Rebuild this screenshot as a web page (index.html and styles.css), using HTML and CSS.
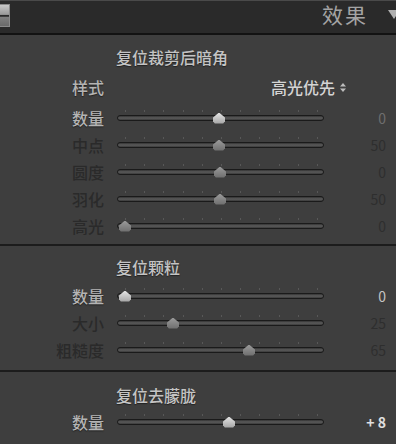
FILE: index.html
```html
<!DOCTYPE html>
<html lang="zh-CN">
<head>
    <meta charset="UTF-8">
    <title>效果</title>
    <link rel="stylesheet" href="styles.css">
</head>
<body>

<div class="panel">
    <div class="header">
        <div class="switch"></div>
        <div class="header-title">效果</div>
        <div class="header-arrow"></div>
    </div>

    <div class="section first">
        <div class="section-title">复位裁剪后暗角</div>
        <div class="style-row">
            <div class="label bright">样式</div>
            <div class="style-value">高光优先
                <svg width="8" height="11" viewBox="0 0 8 11"><path d="M4 1 L7 4.5 H1 Z M1 6.5 H7 L4 10 Z" fill="#bdbdbd"/></svg>
            </div>
        </div>
        <div class="row">
            <div class="label bright">数量</div>
            <div class="slider active"><div class="ticks"></div><div class="track"></div><div class="thumb" style="left: 96px"></div></div>
            <div class="value mid">0</div>
        </div>
        <div class="row">
            <div class="label">中点</div>
            <div class="slider"><div class="ticks"></div><div class="track"></div><div class="thumb" style="left: 96px"></div></div>
            <div class="value">50</div>
        </div>
        <div class="row">
            <div class="label">圆度</div>
            <div class="slider"><div class="ticks"></div><div class="track"></div><div class="thumb" style="left: 97px"></div></div>
            <div class="value">0</div>
        </div>
        <div class="row">
            <div class="label">羽化</div>
            <div class="slider"><div class="ticks"></div><div class="track"></div><div class="thumb" style="left: 97px"></div></div>
            <div class="value">50</div>
        </div>
        <div class="row">
            <div class="label">高光</div>
            <div class="slider"><div class="ticks"></div><div class="track"></div><div class="thumb" style="left: 2px"></div></div>
            <div class="value">0</div>
        </div>
    </div>

    <div class="section second">
        <div class="section-title">复位颗粒</div>
        <div class="row">
            <div class="label bright">数量</div>
            <div class="slider active"><div class="ticks"></div><div class="track"></div><div class="thumb" style="left: 2px"></div></div>
            <div class="value bright">0</div>
        </div>
        <div class="row">
            <div class="label">大小</div>
            <div class="slider"><div class="ticks"></div><div class="track"></div><div class="thumb" style="left: 50px"></div></div>
            <div class="value">25</div>
        </div>
        <div class="row">
            <div class="label">粗糙度</div>
            <div class="slider"><div class="ticks"></div><div class="track"></div><div class="thumb" style="left: 126px"></div></div>
            <div class="value">65</div>
        </div>
    </div>

    <div class="section third">
        <div class="section-title">复位去朦胧</div>
        <div class="row">
            <div class="label bright">数量</div>
            <div class="slider active"><div class="ticks"></div><div class="track"></div><div class="thumb" style="left: 106px"></div></div>
            <div class="value white">+ 8</div>
        </div>
    </div>
</div>

</body>
</html>
```

FILE: styles.css
```css
body {
    margin: 0;
    background-color: #3e3e3e;
    font-family: "Noto Sans CJK SC", "Noto Sans", sans-serif;
    overflow: hidden;
}
.panel {
    width: 396px;
    height: 444px;
    background-color: #3e3e3e;
    overflow: hidden;
}
.header {
    height: 32px;
    background-color: #2a2a2a;
    border-top: 1px solid #4a4a4a;
    border-bottom: 2px solid #121212;
    display: flex;
    align-items: center;
    position: relative;
}
.switch {
    width: 9px;
    height: 21px;
    margin-top: -4px;
    border: 1px solid #8a8a8a;
    border-left: none;
    background: linear-gradient(#c8c8c8, #9a9a9a 45%, #2a2a2a 48%, #2a2a2a 54%, #808080 57%, #6a6a6a);
}
.header-title {
    margin-left: auto;
    margin-right: 20px;
    margin-top: -6px;
    font-size: 21px;
    letter-spacing: 2px;
    color: #a4a4a4;
}
.header-arrow {
    width: 0;
    height: 0;
    border-left: 6px solid transparent;
    border-right: 6px solid transparent;
    border-top: 9px solid #b0b0b0;
    margin-right: -4px;
    margin-top: -6px;
}
.section {
    border-bottom: 2px solid #1c1c1c;
}
.section.first {
    padding: 9px 0 5px;
}
.section.second {
    padding: 8px 0 7px;
}
.section.third {
    padding: 10px 0 10px;
    border-bottom: none;
}
.section-title {
    height: 26px;
    line-height: 26px;
    padding-left: 116px;
    font-size: 16px;
    font-weight: 500;
    color: #c4c4c4;
    text-shadow: 0 1px 1px #222;
}
.section.second .section-title {
    height: 28px;
}
.style-row {
    height: 34px;
    display: flex;
    align-items: center;
}
.style-value {
    margin-left: 167px;
    font-size: 16px;
    font-weight: 500;
    color: #d4d4d4;
    display: flex;
    align-items: center;
    gap: 4px;
}
.row {
    height: 27px;
    display: flex;
    align-items: center;
}
.label {
    width: 104px;
    text-align: right;
    font-size: 16px;
    font-weight: 500;
    color: #2a2a2a;
}
.label.bright {
    color: #b4b4b4;
    text-shadow: 0 1px 1px #222;
}
.slider {
    width: 207px;
    height: 16px;
    margin-left: 13px;
    position: relative;
}
.track {
    position: absolute;
    left: 0;
    right: 0;
    top: 5px;
    height: 4px;
    border: 1px solid #1a1a1a;
    border-radius: 4px;
    background: linear-gradient(#333, #5c5c5c 50%, #3a3a3a);
}
.ticks {
    position: absolute;
    left: 8px;
    top: 0;
    width: 193px;
    height: 2px;
    background: repeating-linear-gradient(90deg, #585858 0, #585858 1px, transparent 1px, transparent 19.2px);
}
.thumb {
    position: absolute;
    top: 3px;
    width: 12px;
    height: 11px;
    background: linear-gradient(#9a9a9a, #6e6e6e);
    clip-path: polygon(50% 0, 100% 45%, 100% 80%, 85% 100%, 15% 100%, 0 80%, 0 45%);
}
.slider.active .thumb {
    background: linear-gradient(#e4e4e4, #a4a4a4);
}
.value {
    width: 62px;
    text-align: right;
    font-size: 14px;
    color: #2e2e2e;
}
.value.mid {
    color: #6e6e6e;
}
.value.bright {
    color: #c4c4c4;
}
.value.white {
    color: #e0e0e0;
    font-weight: bold;
}
```
